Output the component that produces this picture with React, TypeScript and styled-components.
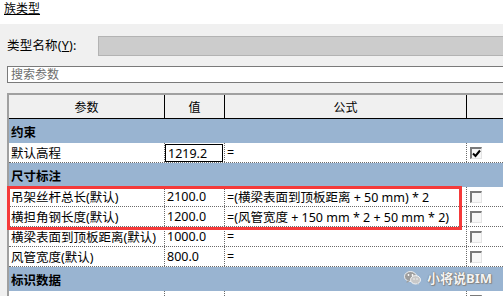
import React from "react";
import styled, { createGlobalStyle } from "styled-components";

const Global = createGlobalStyle`
  html, body { margin: 0; padding: 0; background: #f0f0f0; overflow: hidden; }
  body { font-family: "Noto Sans", "Noto Sans CJK SC", sans-serif; font-size: 12px; color: #000; }
`;

const Page = styled.div`
  position: relative;
  width: 503px;
  height: 296px;
  overflow: hidden;
  background: #f0f0f0;
`;

const TitleBar = styled.div`
  height: 24px;
  background: #fff;
  padding-left: 4px;
  display: flex;
  align-items: flex-start;
  box-sizing: border-box;
`;

const TitleText = styled.span`
  font-size: 12px;
  line-height: 17px;
  text-decoration: underline;
  text-underline-offset: 1px;
`;

const NameRow = styled.div`
  display: flex;
  align-items: center;
  margin-top: 12px;
  padding-left: 7px;
  height: 20px;
`;

const NameLabel = styled.span`
  width: 91px;
  font-size: 12.5px;
  line-height: 20px;
  letter-spacing: 0.2px;
`;

const Accel = styled.span`
  text-decoration: underline;
`;

const NameBox = styled.div`
  flex: 1;
  height: 20px;
  box-sizing: border-box;
  background: #cccccc;
  border-top: 1px solid #b3b3b3;
  border-bottom: 1px solid #b3b3b3;
  border-left: 1px solid #b3b3b3;
  margin-right: -10px;
`;

const SearchBox = styled.div`
  margin: 10px -10px 0 7px;
  height: 17px;
  box-sizing: border-box;
  border: 1px solid #7a7a7a;
  background: #fff;
  display: flex;
  align-items: center;
  padding-left: 3px;
  color: #6d6d6d;
  font-size: 12px;
  line-height: 15px;
`;

const Table = styled.div`
  margin: 10px 0 0 7px;
  width: 540px;
  border-left: 2px solid #a0a0a0;
  border-top: 2px solid #a0a0a0;
`;

const cols = "156px 60px 242px 1fr";

const HeaderRow = styled.div`
  display: grid;
  grid-template-columns: ${cols};
  height: 24px;
  box-sizing: border-box;
  background: #f0f0f0;
  border-bottom: 1px solid #000;
`;

const HeaderCell = styled.div`
  box-sizing: border-box;
  border-right: 1px solid #000;
  display: flex;
  align-items: center;
  justify-content: center;
  font-size: 12px;
`;

const GroupRow = styled.div`
  height: 24px;
  background: #99b4d1;
  display: flex;
  align-items: center;
  padding-left: 2px;
  font-weight: bold;
  font-size: 12.5px;
`;

const DataRow = styled.div`
  display: grid;
  grid-template-columns: ${cols};
  height: 20px;
  box-sizing: border-box;
  border-bottom: 1px dotted #6a6a6a;
  background: #fff;
`;

const Cell = styled.div<{ $pad?: number }>`
  box-sizing: border-box;
  border-right: 1px dotted #6a6a6a;
  display: flex;
  align-items: center;
  padding-left: ${(p) => p.$pad ?? 2}px;
  font-size: 12.5px;
  white-space: nowrap;
  overflow: hidden;
`;

const ValueInput = styled.div`
  flex: 1;
  align-self: stretch;
  margin: 1px 1px 0 0;
  box-sizing: border-box;
  border: 1px solid #000;
  display: flex;
  align-items: center;
  padding-left: 2px;
  font-size: 12.5px;
`;

const Check = styled.div`
  width: 12px;
  height: 12px;
  box-sizing: border-box;
  border-top: 2px solid #7a7a7a;
  border-left: 2px solid #7a7a7a;
  border-right: 1px solid #e4e4e4;
  border-bottom: 1px solid #e4e4e4;
  background: #f7f7f7;
  display: flex;
  align-items: center;
  justify-content: center;
`;

const RedBox = styled.div`
  position: absolute;
  left: 7px;
  top: 186px;
  width: 455px;
  height: 44px;
  box-sizing: border-box;
  border: 3px solid #f53a3a;
  pointer-events: none;
`;

const Watermark = styled.div`
  position: absolute;
  left: 404px;
  top: 268px;
  display: flex;
  align-items: center;
  gap: 6px;
  color: #f4f4f4;
  font-size: 13px;
  font-weight: bold;
  font-family: "Noto Sans", "Noto Sans CJK SC", sans-serif;
  text-shadow: 0 0 1px #6f6f6f, 0 0 1px #6f6f6f, 1px 1px 1px #8a8a8a;
`;

const CheckMark = () => (
  <svg width="9" height="9" viewBox="0 0 9 9">
    <path d="M1 4.5 L3.5 7 L8 1.5" stroke="#000" strokeWidth="2" fill="none" />
  </svg>
);

const WeChat = () => (
  <svg width="17" height="14" viewBox="0 0 17 14">
    <ellipse cx="6.5" cy="5.5" rx="6" ry="5" fill="#9d9d9d" stroke="#fff" strokeWidth="0.8" />
    <path d="M3 9.5 L2.5 12 L5.5 10.2 Z" fill="#9d9d9d" />
    <ellipse cx="11.5" cy="8.8" rx="5" ry="4.2" fill="#c8c8c8" stroke="#fff" strokeWidth="0.8" />
    <path d="M14 12 L15 13.8 L12.5 12.8 Z" fill="#c8c8c8" />
    <circle cx="4.5" cy="4" r="0.9" fill="#fff" />
    <circle cx="8.5" cy="4" r="0.9" fill="#fff" />
    <circle cx="10" cy="8" r="0.7" fill="#fff" />
    <circle cx="13" cy="8" r="0.7" fill="#fff" />
  </svg>
);

type Row = { name: string; value: string; formula: string; editing?: boolean; checked?: boolean };

const dims: Row[] = [
  { name: "吊架丝杆总长(默认)", value: "2100.0", formula: "=(横梁表面到顶板距离 + 50 mm) * 2" },
  { name: "横担角钢长度(默认)", value: "1200.0", formula: "=(风管宽度 + 150 mm * 2 + 50 mm * 2)" },
  { name: "横梁表面到顶板距离(默认)", value: "1000.0", formula: "=" },
  { name: "风管宽度(默认)", value: "800.0", formula: "=" },
];

const ParamRow = ({ r }: { r: Row }) => (
  <DataRow>
    <Cell>{r.name}</Cell>
    {r.editing ? (
      <Cell $pad={0}>
        <ValueInput>{r.value}</ValueInput>
      </Cell>
    ) : (
      <Cell>{r.value}</Cell>
    )}
    <Cell>{r.formula}</Cell>
    <Cell $pad={3}>
      <Check>{r.checked && <CheckMark />}</Check>
    </Cell>
  </DataRow>
);

export default function App() {
  return (
    <Page>
      <Global />
      <TitleBar>
        <TitleText>族类型</TitleText>
      </TitleBar>
      <NameRow>
        <NameLabel>
          类型名称(<Accel>Y</Accel>):
        </NameLabel>
        <NameBox />
      </NameRow>
      <SearchBox>搜索参数</SearchBox>
      <Table>
        <HeaderRow>
          <HeaderCell>参数</HeaderCell>
          <HeaderCell>值</HeaderCell>
          <HeaderCell>公式</HeaderCell>
          <HeaderCell />
        </HeaderRow>
        <GroupRow>约束</GroupRow>
        <ParamRow r={{ name: "默认高程", value: "1219.2", formula: "=", editing: true, checked: true }} />
        <GroupRow>尺寸标注</GroupRow>
        {dims.map((r) => (
          <ParamRow key={r.name} r={r} />
        ))}
        <GroupRow>标识数据</GroupRow>
        <ParamRow r={{ name: "", value: "", formula: "" }} />
      </Table>
      <RedBox />
      <Watermark>
        <WeChat />
        <span>小将说BIM</span>
      </Watermark>
    </Page>
  );
}
